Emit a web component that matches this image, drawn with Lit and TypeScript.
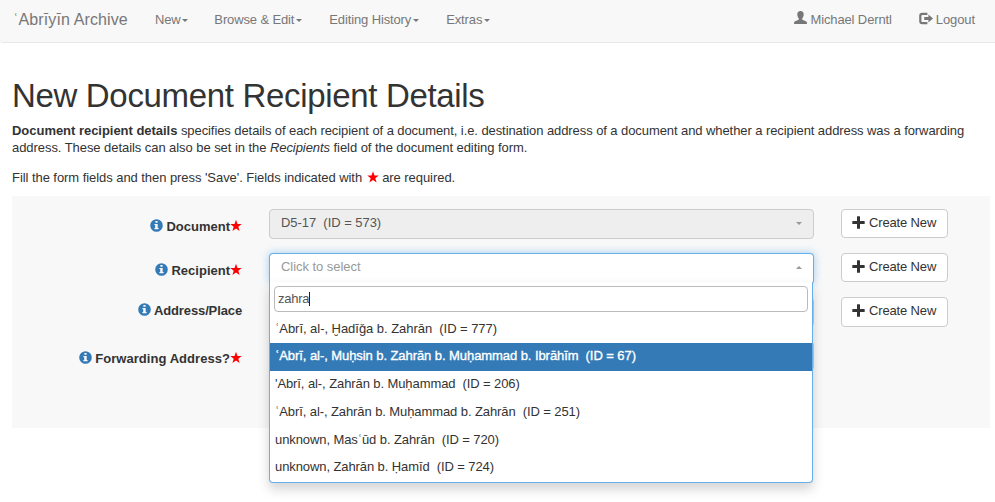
import { LitElement, html, css, svg } from "lit";
import { customElement, property } from "lit/decorators.js";

const glyphs: Record<string, unknown> = {
  user: svg`<path d="M6.5 0C8.6 0 9.8 1.4 9.7 3.5C9.6 5.3 9 6.6 8.2 7.5V8.5C8.6 9.2 11.4 9.8 12.3 10.6C12.9 11.2 13 12 13 13H0C0 12 .1 11.2 .7 10.6C1.6 9.8 4.4 9.2 4.8 8.5V7.5C4 6.6 3.4 5.3 3.3 3.5C3.2 1.4 4.4 0 6.5 0Z"/>`,
  logout: svg`<path d="M8.4 .8H3.2A3 3 0 0 0 .2 3.8V9.2A3 3 0 0 0 3.2 12.2H8.4V10.1H3.6A1.2 1.2 0 0 1 2.4 8.9V4.1A1.2 1.2 0 0 1 3.6 2.9H8.4ZM9.4 2.5V4.9H5.2V8.1H9.4V10.5L14 6.5Z"/>`,
  plus: svg`<path d="M5 .8Q5 .3 5.5 .3H7.5Q8 .3 8 .8V5H12.2Q12.7 5 12.7 5.5V7.5Q12.7 8 12.2 8H8V12.2Q8 12.7 7.5 12.7H5.5Q5 12.7 5 12.2V8H.8Q.3 8 .3 7.5V5.5Q.3 5 .8 5H5Z"/>`,
  star: svg`<path d="M6.5 .3L8.1 4.9H12.7L9 7.8L10.4 12.5L6.5 9.7L2.6 12.5L4 7.8L.3 4.9H4.9Z"/>`,
  info: svg`<path fill-rule="evenodd" d="M6.5 .2A6.3 6.3 0 1 1 6.5 12.8A6.3 6.3 0 1 1 6.5 .2ZM5.4 2.1V3.8H7.6V2.1ZM4.4 4.9V6H5.2V9.1H4.4V10.3H8.6V9.1H7.7V4.9Z"/>`,
};

@customElement("glyph-icon")
class GlyphIcon extends LitElement {
  @property() name = "";
  static styles = css`
    :host { display: inline-block; width: 13px; height: 13px; flex: none; }
    svg { display: block; width: 100%; height: 100%; fill: currentColor; overflow: visible; }
  `;
  render() {
    return html`<svg viewBox="0 0 13 13">${glyphs[this.name]}</svg>`;
  }
}

@customElement("app-root")
class AppRoot extends LitElement {
  static styles = css`
    :host { display: block; height: 502px; overflow: hidden; background: #fff; color: #333;
      font: 13px/17px "Liberation Sans", Arial, sans-serif; }
    * { box-sizing: border-box; }
    nav { display: flex; height: 43px; background: #f8f8f8; border-bottom: 1px solid #e7e7e7;
      border-radius: 0 0 0 3px; color: #777; white-space: nowrap; padding: 0 20px 0 13px; line-height: 39px; }
    .brand { font-size: 16px; line-height: 40px; width: 142px; letter-spacing: .12px; }
    .menu { display: flex; align-items: center; height: 39px; margin-right: 26.3px; letter-spacing: -.18px; }
    .menu:nth-of-type(n+3) { letter-spacing: -.13px; margin-right: 27px; }
    .caret { border: 3px solid transparent; border-top-color: currentColor; border-bottom: 0; width: 0; margin-left: 1.6px; margin-top: 2px; }
    .menu:nth-of-type(n+3) .caret { margin-left: 2px; }
    .user { display: flex; align-items: center; height: 39px; gap: 3px; margin-left: auto; letter-spacing: -.12px; }
    .logout { display: flex; align-items: center; height: 39px; gap: 4px; margin-left: 27px; letter-spacing: -.1px; }
    .user glyph-icon { margin-top: -4px; }
    .logout glyph-icon { margin-top: -3px; }
    main { padding: 33px 5px 0 12px; }
    h1 { margin: 0; font-size: 33px; line-height: 40px; font-weight: 400; white-space: nowrap; letter-spacing: -.33px; }
    p { margin: 0 0 13px; white-space: nowrap; }
    .intro { margin-top: 6px; letter-spacing: -.08px; }
    .intro b { letter-spacing: -.03px; }
    .line { letter-spacing: -.06px; }
    .fill { height: 17px; letter-spacing: -.06px; margin-bottom: 10px; }
    .star { color: #f00; }
    p .star { vertical-align: -1px; width: 12px; height: 12px; margin: 0 0 0 1px; }
    .panel { height: 232px; background: #f8f8f8; padding-top: 13px;
      display: grid; grid-template-columns: 230px 545px 107px; column-gap: 27px; grid-auto-rows: 44px; align-items: start; }
    .label { display: flex; justify-content: flex-end; align-items: center; height: 34px; font-weight: 700; white-space: nowrap; }
    .label glyph-icon { margin-top: -1px; }
    .info { color: #337ab7; margin-right: 3px; }
    .label .star { width: 12px; }
    .short { height: 26px; letter-spacing: -.12px; }
    .wide { letter-spacing: .05px; }
    .select { position: relative; height: 30px; border: 1px solid #ccc; border-radius: 4px; background: #fff;
      padding: 0 11px; display: flex; align-items: center; justify-content: space-between; line-height: 26px; }
    .disabled { background: #eee; color: #555; }
    .select .val { margin-top: -2px; white-space: pre; letter-spacing: -.04px; }
    .arrow { border: 3px solid transparent; border-top-color: #999; border-bottom: 0; margin-top: -1px; }
    .arrow.up { border-top: 0; border-bottom: 3px solid #999; margin-top: -2px; }
    .open { border-color: #66afe9; color: #999; box-shadow: 0 0 8px rgba(102,175,233,.6); border-bottom-color: #fff; border-radius: 4px 4px 0 0; }
    .open .val { margin-top: -3px; }
    .btn { height: 29px; border: 1px solid #ccc; border-radius: 4px; background: #fff; display: flex; align-items: center;
      padding: 0 0 2px 10px; gap: 4px; white-space: nowrap; letter-spacing: -.15px; }
    .tall { height: 30px; padding-bottom: 3px; }
    .drop { position: absolute; z-index: 5; left: -1px; top: 28px; width: 544px; height: 201px; color: #333; background: #fff;
      border: 1px solid #66afe9; border-top: 0; border-radius: 0 0 4px 4px; box-shadow: 0 6px 12px rgba(0,0,0,.175); padding-top: 4px; }
    .search { height: 26px; margin: 0 4px 3px; border: 1px solid #bbb; border-radius: 4px; padding: 0 3px; display: flex; align-items: center; color: #555; letter-spacing: -.25px; }
    .cursor { width: 1px; height: 14px; background: #222; }
    .item { height: 27.7px; line-height: 27px; padding-left: 5px; white-space: pre; letter-spacing: -.09px; }
    .first { letter-spacing: -.04px; }
    .on { height: 28px; margin-bottom: -.3px; background: #337ab7; color: #fff; -webkit-text-stroke: .35px #fff; line-height: 26px; letter-spacing: -.07px; }
  `;

  private menu(text: string) {
    return html`<div class="menu"><span>${text}</span><i class="caret"></i></div>`;
  }
  private label(text: string, required = true, size = "") {
    return html`<div class="label ${size}"><glyph-icon class="info" name="info"></glyph-icon><span>${text}</span>${required
      ? html`<glyph-icon class="star" name="star"></glyph-icon>` : ""}</div>`;
  }
  private button(tall = false) {
    return html`<div class="btn ${tall ? "tall" : ""}"><glyph-icon name="plus"></glyph-icon><span>Create New</span></div>`;
  }

  render() {
    const items = [
      "ʿAbrī, al-, Ḫadīǧa b. Zahrān  (ID = 777)",
      "ʿAbrī, al-, Muḥsin b. Zahrān b. Muḥammad b. Ibrāhīm  (ID = 67)",
      "'Abrī, al-, Zahrān b. Muḥammad  (ID = 206)",
      "ʿAbrī, al-, Zahrān b. Muḥammad b. Zahrān  (ID = 251)",
      "unknown, Masʿūd b. Zahrān  (ID = 720)",
      "unknown, Zahrān b. Ḥamīd  (ID = 724)",
    ];
    return html`
      <nav>
        <div class="brand">ʿAbrīyīn Archive</div>
        ${["New", "Browse & Edit", "Editing History", "Extras"].map((t) => this.menu(t))}
        <div class="user"><glyph-icon name="user"></glyph-icon><span>Michael Derntl</span></div>
        <div class="logout"><glyph-icon name="logout"></glyph-icon><span>Logout</span></div>
      </nav>
      <main>
        <h1>New Document Recipient Details</h1>
        <p class="intro"><b>Document recipient details</b> specifies details of each recipient of a document, i.e. destination address of a document and whether a recipient address was a forwarding<br><span class="line">address. These details can also be set in the <i>Recipients</i> field of the document editing form.</span></p>
        <p class="fill">Fill the form fields and then press 'Save'. Fields indicated with <glyph-icon class="star" name="star"></glyph-icon> are required.</p>
        <div class="panel">
          ${this.label("Document")}
          <div class="select disabled"><span class="val">D5-17  (ID = 573)</span><i class="arrow"></i></div>
          ${this.button()}
          ${this.label("Recipient")}
          <div class="select open"><span class="val">Click to select</span><i class="arrow up"></i>
            <div class="drop">
              <div class="search"><span>zahra</span><i class="cursor"></i></div>
              ${items.map((t, i) => html`<div class="item ${i === 0 ? "first" : i === 1 ? "on" : ""}">${t}</div>`)}
            </div>
          </div>
          ${this.button()}
          ${this.label("Address/Place", false, "short")}
          <div class="select"></div>
          ${this.button(true)}
          ${this.label("Forwarding Address?", true, "wide")}
          <div class="select"></div>
        </div>
      </main>`;
  }
}
